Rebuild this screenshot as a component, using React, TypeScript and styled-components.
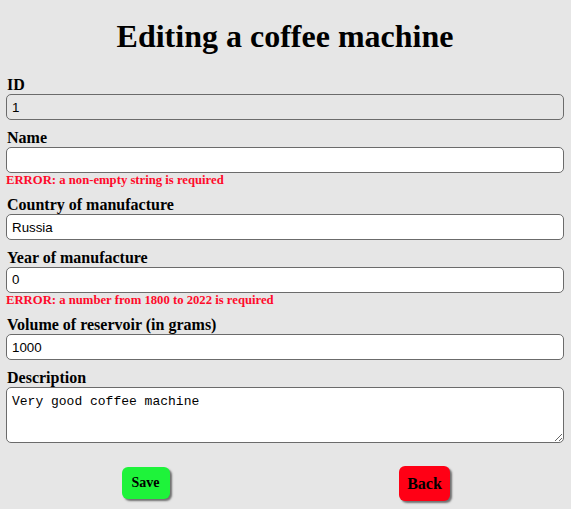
import { createGlobalStyle } from 'styled-components';
import styled from 'styled-components';

const GlobalStyle = createGlobalStyle`
  html, body {
    margin: 0;
    background: #e6e6e6;
    font-family: "Liberation Serif", "Times New Roman", serif;
  }
`;

const Page = styled.main`
  padding: 0 7px 8px 6px;
`;

const Title = styled.h1`
  margin: 0;
  padding: 18px 0 21px;
  text-align: center;
  font-size: 32px;
  line-height: 37px;
  font-weight: 700;
  color: #000;
`;

const Form = styled.form`
  display: flex;
  flex-direction: column;
`;

const Field = styled.div`
  display: flex;
  flex-direction: column;
  margin-bottom: 8.6px;
`;

const Label = styled.label`
  display: block;
  padding-left: 1px;
  font-size: 16px;
  line-height: 18px;
  font-weight: 700;
  color: #000;
`;

const Input = styled.input<{ $readOnly?: boolean }>`
  box-sizing: border-box;
  width: 100%;
  height: 26px;
  margin: 0;
  padding: 0 5px;
  border: 1px solid #6b6b6b;
  border-radius: 5px;
  background: ${({ $readOnly }) => ($readOnly ? '#e6e6e6' : '#fff')};
  font-family: "Liberation Sans", Arial, sans-serif;
  font-size: 13.33px;
  color: #000;
  outline: none;
`;

const TextArea = styled.textarea`
  box-sizing: border-box;
  width: 100%;
  height: 56px;
  margin: 0;
  padding: 6px 5px;
  border: 1px solid #6b6b6b;
  border-radius: 5px;
  background: #fff;
  font-family: "Liberation Mono", "Courier New", monospace;
  font-size: 13px;
  color: #000;
  outline: none;
`;

const ErrorText = styled.span`
  display: block;
  padding-left: 0;
  font-size: 12.7px;
  line-height: 15px;
  font-weight: 700;
  color: #ff0a2a;
`;

const Actions = styled.div`
  display: grid;
  grid-template-columns: 1fr 1fr;
  justify-items: center;
  align-items: center;
  padding-top: 14px;
`;

const Button = styled.button<{ $color: string; $big?: boolean }>`
  padding: ${({ $big }) => ($big ? '8px 8px' : '7px 10px')};
  border: none;
  border-radius: 6px;
  background: ${({ $color }) => $color};
  box-shadow: 2px 2px 2px #6f6f6f;
  font-family: "Liberation Serif", "Times New Roman", serif;
  font-size: ${({ $big }) => ($big ? '16px' : '14px')};
  line-height: ${({ $big }) => ($big ? '19px' : '18px')};
  font-weight: 700;
  color: #000;
  cursor: pointer;
`;

export default function App() {
  return (
    <Page>
      <GlobalStyle />
      <Title>Editing a coffee machine</Title>
      <Form onSubmit={(e) => e.preventDefault()}>
        <Field>
          <Label htmlFor="id">ID</Label>
          <Input id="id" $readOnly readOnly defaultValue="1" />
        </Field>
        <Field>
          <Label htmlFor="name">Name</Label>
          <Input id="name" defaultValue="" />
          <ErrorText>ERROR: a non-empty string is required</ErrorText>
        </Field>
        <Field>
          <Label htmlFor="country">Country of manufacture</Label>
          <Input id="country" defaultValue="Russia" />
        </Field>
        <Field>
          <Label htmlFor="year">Year of manufacture</Label>
          <Input id="year" defaultValue="0" />
          <ErrorText>ERROR: a number from 1800 to 2022 is required</ErrorText>
        </Field>
        <Field>
          <Label htmlFor="volume">Volume of reservoir (in grams)</Label>
          <Input id="volume" defaultValue="1000" />
        </Field>
        <Field>
          <Label htmlFor="description">Description</Label>
          <TextArea id="description" defaultValue="Very good coffee machine" />
        </Field>
        <Actions>
          <Button type="submit" $color="#1ef33a">Save</Button>
          <Button type="button" $color="#ff0015" $big>Back</Button>
        </Actions>
      </Form>
    </Page>
  );
}
